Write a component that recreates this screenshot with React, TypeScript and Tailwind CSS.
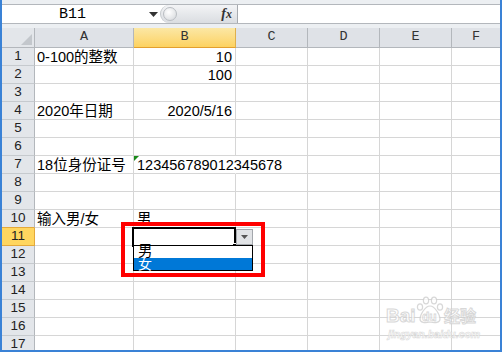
import React from "react";

type RowData = { a?: string; b?: string; right?: boolean; tri?: boolean };

const data: Record<number, RowData> = {
  1: { a: "0-100的整数", b: "10", right: true },
  2: { b: "100", right: true },
  4: { a: "2020年日期", b: "2020/5/16", right: true },
  7: { a: "18位身份证号", b: "123456789012345678", tri: true },
  10: { a: "输入男/女", b: "男" },
};

const cellFont = "font-['Liberation_Sans','Noto_Sans_CJK_SC',sans-serif] text-[14.5px] text-black";

function Row({ n }: { n: number }) {
  const d = data[n] || {};
  const sel = n === 11;
  const aboveSel = n === 10;
  return (
    <div className="flex h-[18px] shrink-0">
      <div
        className={`w-[33px] shrink-0 border-r border-b flex items-end justify-center pb-[1px] leading-[16px] font-['Liberation_Sans',sans-serif] text-[13.5px] text-[#222] ${
          sel
            ? "bg-[#ffd65f] border-r-[#e4a93a] border-b-[#e4a93a]"
            : aboveSel
            ? "bg-[#e3e6ea] border-r-[#b3b7bc] border-b-[#e4a93a]"
            : "bg-[#e3e6ea] border-r-[#b3b7bc] border-b-[#c6cace]"
        }`}
      >
        {n}
      </div>
      <div className={`w-[99px] shrink-0 border-r border-b border-[#d6d6d6] flex items-end pl-[2px] leading-[16px] whitespace-nowrap ${cellFont}`}>
        {d.a}
      </div>
      <div
        className={`relative w-[102px] shrink-0 border-b border-[#d6d6d6] flex items-end leading-[16px] whitespace-nowrap z-10 ${cellFont} ${
          d.tri ? "border-r border-r-transparent" : "border-r"
        } ${d.right ? "justify-end pr-[3px]" : "pl-[3px]"}`}
      >
        {d.tri && (
          <svg className="absolute left-0 top-0" width="5" height="5" viewBox="0 0 5 5">
            <polygon points="0,0 5,0 0,5" fill="#1a8a1a" />
          </svg>
        )}
        {d.b}
      </div>
      <div className="w-[72px] shrink-0 border-r border-b border-[#d6d6d6]" />
      <div className="w-[72px] shrink-0 border-r border-b border-[#d6d6d6]" />
      <div className="w-[72px] shrink-0 border-r border-b border-[#d6d6d6]" />
      <div className="flex-1 border-b border-[#d6d6d6]" />
    </div>
  );
}

const headFont = "font-['Liberation_Mono',monospace] text-[13.5px] text-[#333]";

export default function App() {
  const rows = Array.from({ length: 17 }, (_, i) => i + 1);
  return (
    <div className="relative w-[502px] h-[352px] overflow-hidden bg-white border-l-2 border-r-2 border-b-2 border-[#3a82d6] flex flex-col">
      {/* formula bar */}
      <div className="h-[28px] shrink-0 bg-[#eceff2] py-[4px] flex">
        <div className="flex-1 flex h-[20px] border-y border-[#b3b7bc] bg-white">
          <div className="relative w-[158px] shrink-0 flex items-center pl-[57px]">
            <span className="font-['Liberation_Mono',monospace] text-[15px] text-black leading-none">B11</span>
            <svg className="absolute left-[147px] top-[7px]" width="9" height="5" viewBox="0 0 9 5">
              <polygon points="0,0 9,0 4.5,5" fill="#333" />
            </svg>
          </div>
          <div className="relative w-[77px] shrink-0 rounded-l-[10px] bg-gradient-to-b from-[#f3f4f6] to-[#dadde1] border-l border-[#c4c8cc] flex items-center justify-end pr-[5px]">
            <div className="absolute left-[2px] top-[2px] w-[14px] h-[14px] rounded-full border border-[#b9bdc2] bg-[radial-gradient(circle_at_40%_35%,#ffffff,#d3d6da)]" />
            <span className="font-['Liberation_Serif',serif] italic font-bold text-[14px] text-[#333] leading-none">
              f<span className="text-[12px]">x</span>
            </span>
          </div>
          <div className="flex-1 border-l border-[#a7abb0] bg-white" />
        </div>
      </div>

      {/* column headers */}
      <div className="flex h-[20px] shrink-0">
        <div className="relative w-[33px] shrink-0 bg-[#e3e6ea] border-r border-b border-[#b3b7bc]">
          <svg className="absolute right-[2px] bottom-[2px]" width="11" height="11" viewBox="0 0 11 11">
            <polygon points="11,0 11,11 0,11" fill="#c3c7cc" />
          </svg>
        </div>
        <div className={`w-[99px] shrink-0 bg-[#dfe2e7] border-r border-b border-[#b3b7bc] flex items-center justify-center ${headFont}`}>A</div>
        <div className={`w-[102px] shrink-0 bg-gradient-to-b from-[#fbe7a4] to-[#fdd25f] border-r border-b border-r-[#dfb04c] border-b-[#e39f2e] flex items-center justify-center ${headFont}`}>B</div>
        <div className={`w-[72px] shrink-0 bg-[#dfe2e7] border-r border-b border-[#b3b7bc] flex items-center justify-center ${headFont}`}>C</div>
        <div className={`w-[72px] shrink-0 bg-[#dfe2e7] border-r border-b border-[#b3b7bc] flex items-center justify-center ${headFont}`}>D</div>
        <div className={`w-[72px] shrink-0 bg-[#dfe2e7] border-r border-b border-[#b3b7bc] flex items-center justify-center ${headFont}`}>E</div>
        <div className={`flex-1 bg-[#dfe2e7] border-b border-[#b3b7bc] flex items-center justify-center ${headFont}`}>F</div>
      </div>

      {/* rows */}
      <div className="flex flex-col">
        {rows.map((n) => (
          <Row key={n} n={n} />
        ))}
      </div>

      {/* selection border on B11 */}
      <div className="absolute left-[130px] top-[227px] w-[104px] h-[20px] border-2 border-black z-20">
        <div className="absolute right-[-3px] bottom-[-3px] w-[5px] h-[5px] bg-black border border-white" />
      </div>

      {/* dropdown button */}
      <div className="absolute left-[234px] top-[229px] w-[17px] h-[16px] bg-[#e1e3e6] border border-[#a3a7ac] flex items-center justify-center z-20">
        <svg width="7" height="4" viewBox="0 0 7 4">
          <polygon points="0,0 7,0 3.5,4" fill="#555" />
        </svg>
      </div>

      {/* dropdown list */}
      <div className="absolute left-[131px] top-[245px] w-[120px] h-[26px] border border-black bg-white z-20 flex flex-col">
        <div className={`h-[12px] pl-[4px] leading-[11px] overflow-visible ${cellFont}`}>男</div>
        <div className="h-[12px] pl-[4px] leading-[13px] bg-[#0078d7] font-['Liberation_Sans','Noto_Sans_CJK_SC',sans-serif] text-[14px]">
          <span className="text-white">女</span>
        </div>
      </div>

      {/* red highlight box */}
      <div className="absolute left-[119px] top-[222px] w-[144px] h-[55px] border-4 border-[#ff0000] z-30" />

      {/* watermark */}
      <div className="absolute left-[382px] top-[295px] w-[96px] h-[48px] z-30 opacity-80 pointer-events-none">
        <div className="absolute left-[2px] top-[11px] font-['Liberation_Sans',sans-serif] font-bold text-[19px] leading-none text-white [-webkit-text-stroke:1px_#cfcfcf]">
          Bai
        </div>
        <svg className="absolute left-[31px] top-[1px]" width="30" height="28" viewBox="0 0 30 28">
          <g fill="#ffffff" stroke="#cfcfcf" strokeWidth="1.2">
            <ellipse cx="5" cy="11" rx="2.6" ry="3.2" />
            <ellipse cx="11" cy="4.5" rx="2.6" ry="3.4" />
            <ellipse cx="19" cy="4.5" rx="2.6" ry="3.4" />
            <ellipse cx="25" cy="11" rx="2.6" ry="3.2" />
            <path d="M15 10 C10 10 5 19 5 23 C5 27 10 27 15 26 C20 27 25 27 25 23 C25 19 20 10 15 10 Z" />
          </g>
        </svg>
        <div className="absolute left-[38px] top-[16px] font-['Liberation_Sans',sans-serif] font-bold text-[12px] leading-none text-white [-webkit-text-stroke:0.8px_#cfcfcf]">
          du
        </div>
        <div className="absolute left-[60px] top-[12px] font-['Noto_Sans_CJK_SC',sans-serif] font-bold text-[16px] leading-none text-white [-webkit-text-stroke:1px_#cfcfcf]">
          经验
        </div>
        <div className="absolute left-[4px] top-[34px] font-['Liberation_Sans',sans-serif] font-bold italic text-[10.5px] leading-none text-white [-webkit-text-stroke:0.6px_#d2d2d2] whitespace-nowrap">
          jingyan.baidu.com
        </div>
      </div>
    </div>
  );
}
